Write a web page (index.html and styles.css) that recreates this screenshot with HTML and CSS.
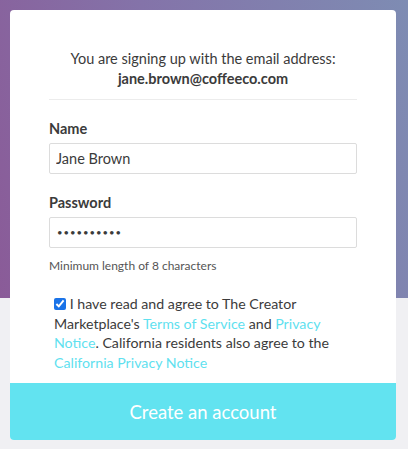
FILE: index.html
```html
<!DOCTYPE html>
<html>
<head>
<meta charset="utf-8">
<link rel="stylesheet" href="styles.css">
</head>
<body>
<div class="page">
  <div class="card">
    <div class="body">
      <p class="intro">You are signing up with the email address:<br><strong>jane.brown@coffeeco.com</strong></p>
      <hr class="divider">
      <label class="label" for="name">Name</label>
      <input class="input" id="name" type="text" value="Jane Brown">
      <label class="label pw" for="pw">Password</label>
      <input class="input dots" id="pw" type="text" value="••••••••••">
      <p class="hint">Minimum length of 8 characters</p>
      <p class="agree"><input class="check" type="checkbox" checked> I have read and agree to The Creator Marketplace's <a href="#">Terms of Service</a> and <a href="#">Privacy Notice</a>. California residents also agree to the <a href="#">California Privacy Notice</a></p>
    </div>
    <button class="submit" type="button">Create an account</button>
  </div>
</div>
</body>
</html>
```
FILE: styles.css
```css
html, body {
  margin: 0;
  padding: 0;
}
body {
  font-family: Lato, "Open Sans", sans-serif;
  color: #3b3b3b;
  background: #f0f0f3;
}
.page {
  min-height: 449px;
  padding: 10px;
  box-sizing: border-box;
  background:
    linear-gradient(75deg, #8a5b98 0%, #8473a9 45%, #7e8cb3 100%) top left / 100% 298px no-repeat,
    #f0f0f3;
}
.card {
  width: 386px;
  background: #fff;
  border-radius: 4px;
  display: flex;
  flex-direction: column;
}
.body {
  padding: 39px 39px 0 39px;
}
.intro {
  margin: 0;
  text-align: center;
  font-size: 14.5px;
  line-height: 20px;
}
.intro strong {
  font-weight: 700;
}
.divider {
  border: 0;
  border-top: 1px solid #ececec;
  margin: 10px 0 0 0;
}
.label {
  display: block;
  font-weight: 700;
  font-size: 14.5px;
  line-height: 20px;
  margin-top: 19px;
}
.input {
  display: block;
  box-sizing: border-box;
  width: 100%;
  height: 31px;
  margin-top: 4px;
  padding: 0 6px;
  border: 1px solid #dcdcdc;
  border-radius: 2px;
  font-family: inherit;
  font-size: 14.5px;
  color: #3b3b3b;
}
.input.dots {
  font-size: 9.5px;
  letter-spacing: 1px;
  padding-left: 7px;
}
.hint {
  margin: 10px 0 0 0;
  font-size: 12px;
  line-height: 16px;
  color: #555;
}
.agree {
  margin: 20px 0 0 0;
  padding: 0 0 0 5px;
  font-size: 14.2px;
  line-height: 19.5px;
}
.agree a {
  color: #5fe1ef;
  text-decoration: none;
}
.check {
  width: 12px;
  height: 12px;
  margin: 0;
  vertical-align: -1px;
  accent-color: #1a73e8;
}
.submit {
  margin-top: 11px;
  height: 57px;
  border: 0;
  border-radius: 0 0 4px 4px;
  background: #62e3f0;
  color: #fff;
  font-family: inherit;
  font-size: 18.5px;
}
```
